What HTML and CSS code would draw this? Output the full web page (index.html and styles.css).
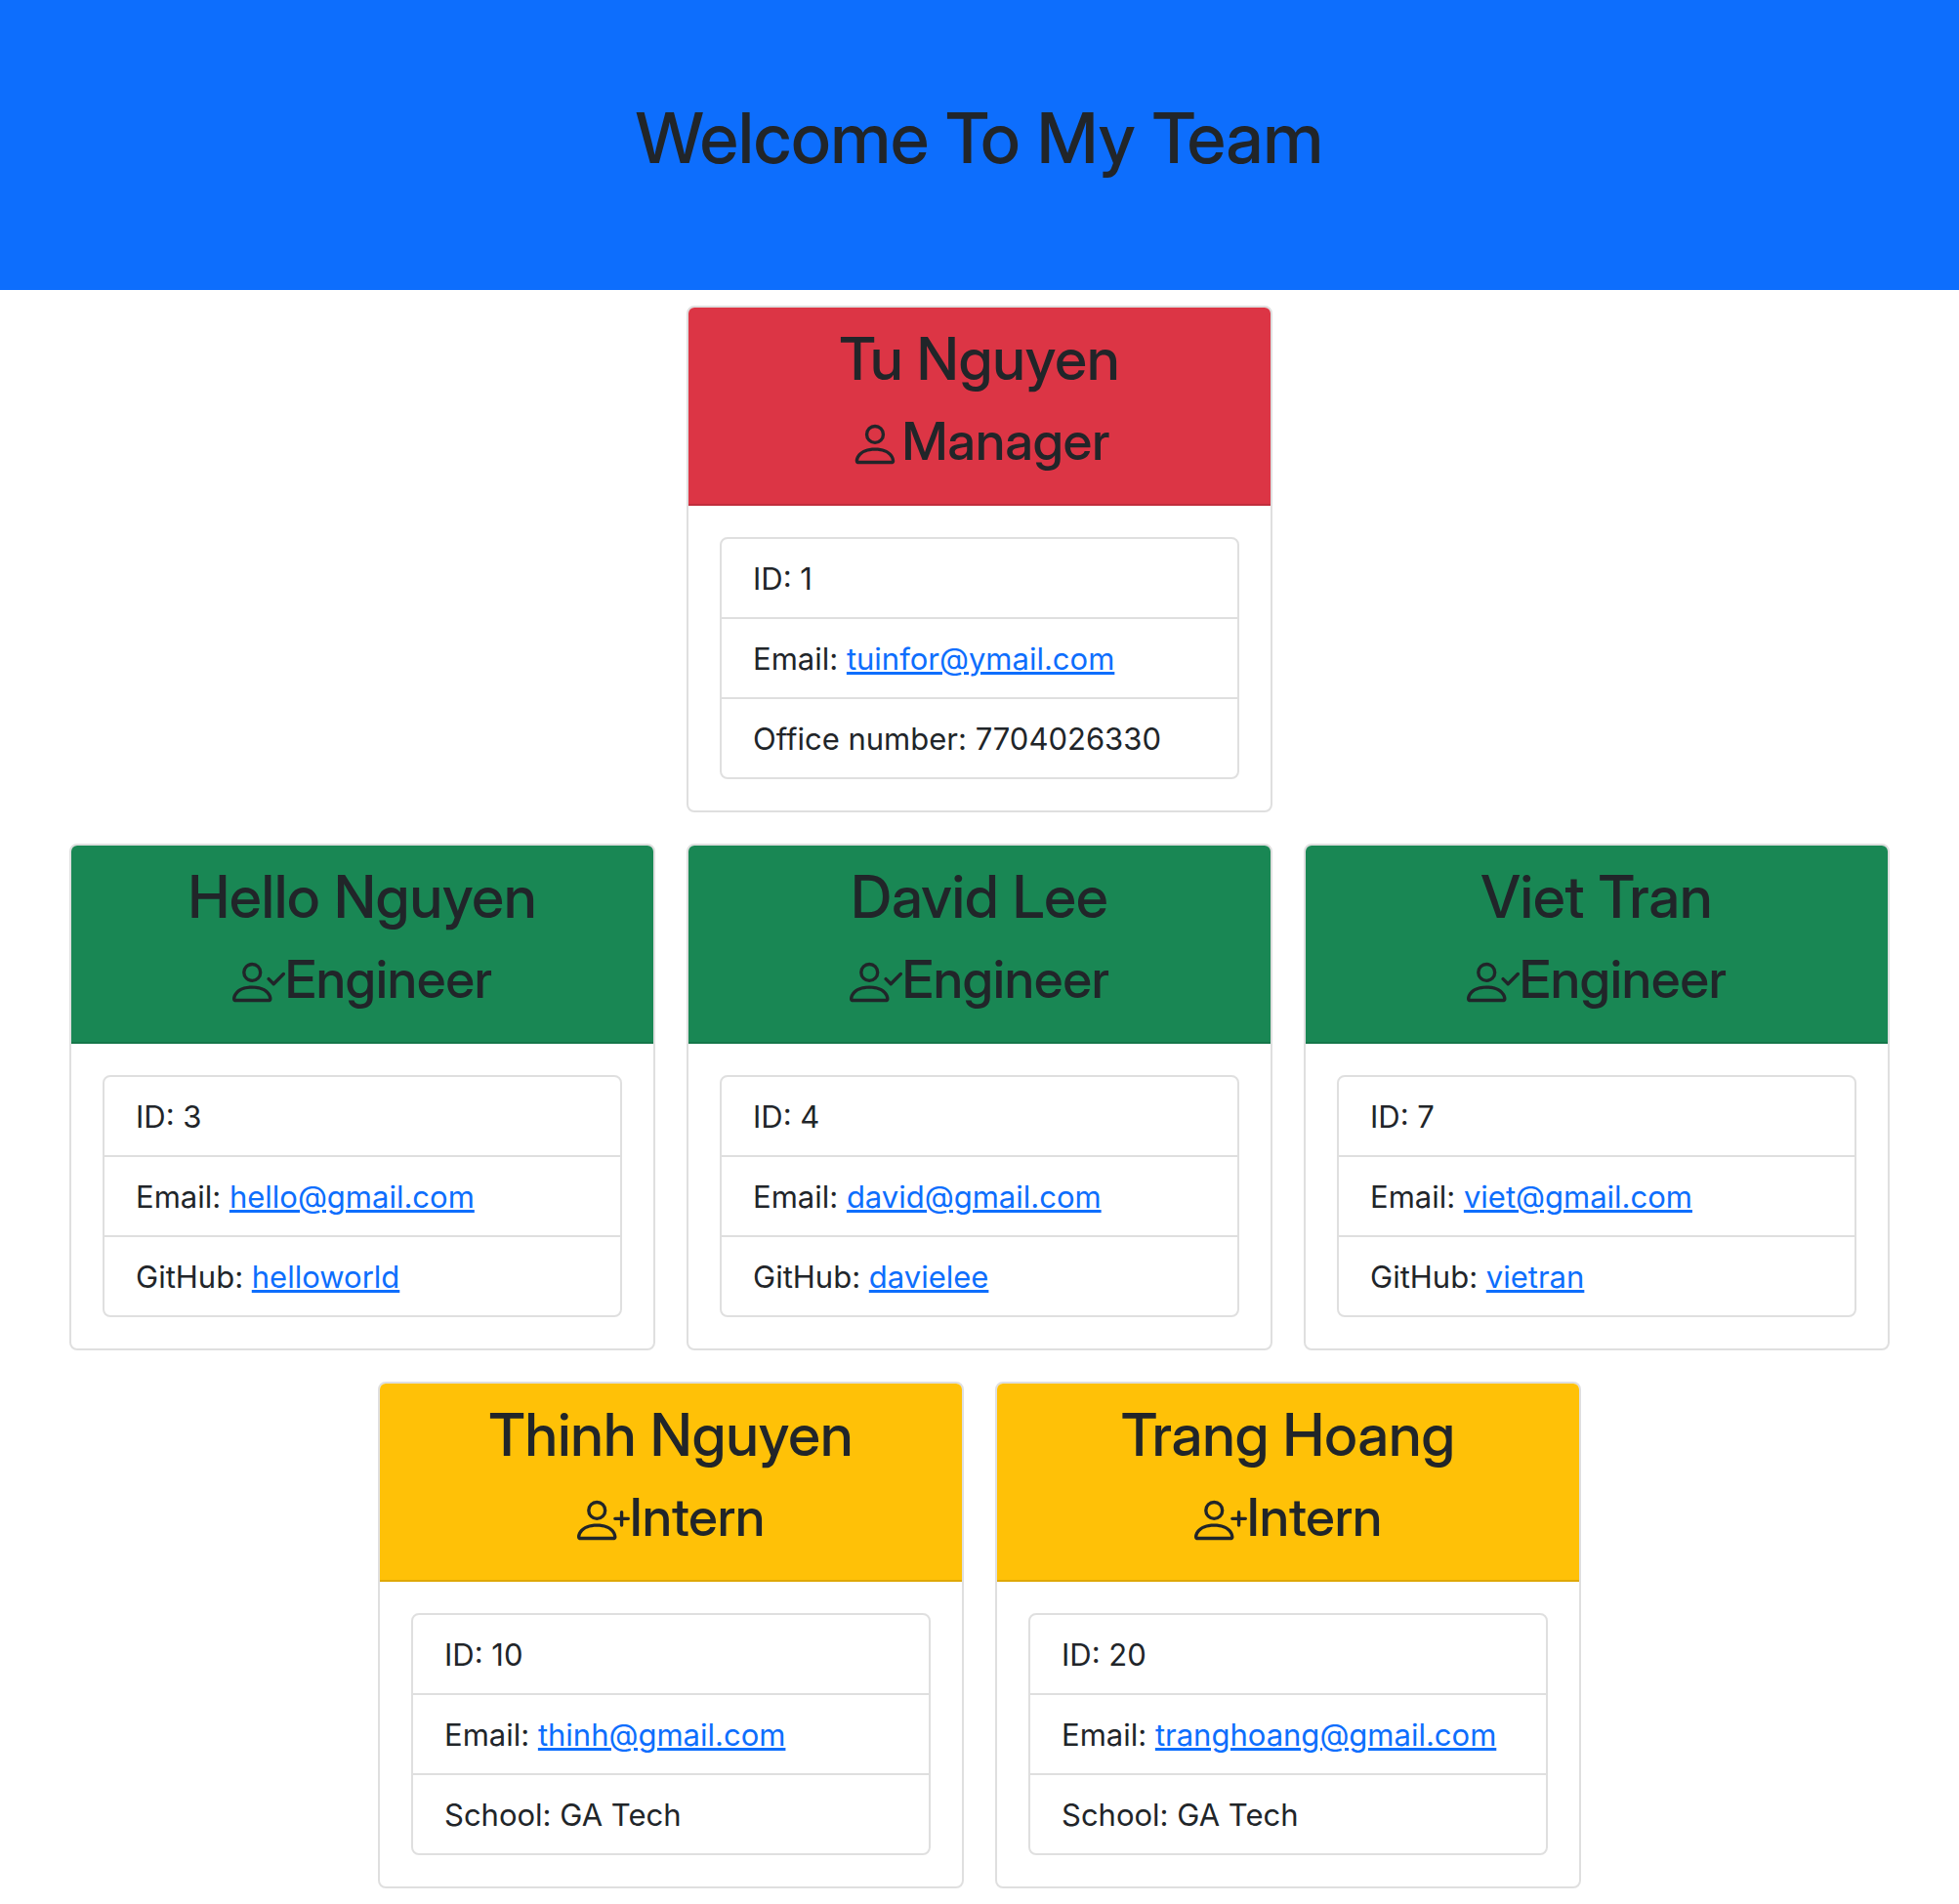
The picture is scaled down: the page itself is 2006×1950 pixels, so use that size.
FILE: index.html
```html
<!DOCTYPE html>
<html lang="en">
<head>
<meta charset="utf-8">
<meta name="viewport" content="width=device-width, initial-scale=1">
<title>My Team</title>
<link rel="stylesheet" href="styles.css">
</head>
<body>
<svg class="sprite" aria-hidden="true">
  <symbol id="person" viewBox="0 0 16 16"><path d="M8 8a3 3 0 1 0 0-6 3 3 0 0 0 0 6zm2-3a2 2 0 1 1-4 0 2 2 0 0 1 4 0zm4 8c0 1-1 1-1 1H3s-1 0-1-1 1-4 6-4 6 3 6 4zm-1-.004c-.001-.246-.154-.986-.832-1.664C11.516 10.68 10.289 10 8 10c-2.29 0-3.516.68-4.168 1.332-.678.678-.83 1.418-.832 1.664h10z"/></symbol>
  <symbol id="person-side" viewBox="0 0 16 16"><path d="M6 8a3 3 0 1 0 0-6 3 3 0 0 0 0 6zm2-3a2 2 0 1 1-4 0 2 2 0 0 1 4 0zm4 8c0 1-1 1-1 1H1s-1 0-1-1 1-4 6-4 6 3 6 4zm-1-.004c-.001-.246-.154-.986-.832-1.664C9.516 10.68 8.289 10 6 10c-2.29 0-3.516.68-4.168 1.332-.678.678-.83 1.418-.832 1.664h10z"/></symbol>
  <symbol id="person-check" viewBox="0 0 16 16"><use href="#person-side"/><path d="M15.854 5.146a.5.5 0 0 1 0 .708l-3 3a.5.5 0 0 1-.708 0l-1.5-1.5a.5.5 0 0 1 .708-.708L12.5 7.793l2.646-2.647a.5.5 0 0 1 .708 0z"/></symbol>
  <symbol id="person-plus" viewBox="0 0 16 16"><use href="#person-side"/><path d="M13.5 5a.5.5 0 0 1 .5.5V7h1.5a.5.5 0 0 1 0 1H14v1.5a.5.5 0 0 1-1 0V8h-1.5a.5.5 0 0 1 0-1H13V5.5a.5.5 0 0 1 .5-.5z"/></symbol>
</svg>
<header class="banner"><h1 class="banner-title">Welcome To My Team</h1></header>
<main class="team">
  <section class="team-row">
    <article class="card">
      <div class="card-header manager">
        <h2 class="name">Tu Nguyen</h2>
        <h3 class="role"><svg class="icon" aria-hidden="true"><use href="#person"/></svg>Manager</h3>
      </div>
      <ul class="details">
        <li>ID: 1</li>
        <li>Email: <a href="mailto:tuinfor@ymail.com">tuinfor@ymail.com</a></li>
        <li>Office number: 7704026330</li>
      </ul>
    </article>
  </section>
  <section class="team-row">
    <article class="card">
      <div class="card-header engineer">
        <h2 class="name">Hello Nguyen</h2>
        <h3 class="role"><svg class="icon" aria-hidden="true"><use href="#person-check"/></svg>Engineer</h3>
      </div>
      <ul class="details">
        <li>ID: 3</li>
        <li>Email: <a href="mailto:hello@gmail.com">hello@gmail.com</a></li>
        <li>GitHub: <a href="https://github.com/helloworld">helloworld</a></li>
      </ul>
    </article>
    <article class="card">
      <div class="card-header engineer">
        <h2 class="name">David Lee</h2>
        <h3 class="role"><svg class="icon" aria-hidden="true"><use href="#person-check"/></svg>Engineer</h3>
      </div>
      <ul class="details">
        <li>ID: 4</li>
        <li>Email: <a href="mailto:david@gmail.com">david@gmail.com</a></li>
        <li>GitHub: <a href="https://github.com/davielee">davielee</a></li>
      </ul>
    </article>
    <article class="card">
      <div class="card-header engineer">
        <h2 class="name">Viet Tran</h2>
        <h3 class="role"><svg class="icon" aria-hidden="true"><use href="#person-check"/></svg>Engineer</h3>
      </div>
      <ul class="details">
        <li>ID: 7</li>
        <li>Email: <a href="mailto:viet@gmail.com">viet@gmail.com</a></li>
        <li>GitHub: <a href="https://github.com/vietran">vietran</a></li>
      </ul>
    </article>
  </section>
  <section class="team-row">
    <article class="card">
      <div class="card-header intern">
        <h2 class="name">Thinh Nguyen</h2>
        <h3 class="role"><svg class="icon" aria-hidden="true"><use href="#person-plus"/></svg>Intern</h3>
      </div>
      <ul class="details">
        <li>ID: 10</li>
        <li>Email: <a href="mailto:thinh@gmail.com">thinh@gmail.com</a></li>
        <li>School: GA Tech</li>
      </ul>
    </article>
    <article class="card">
      <div class="card-header intern">
        <h2 class="name">Trang Hoang</h2>
        <h3 class="role"><svg class="icon" aria-hidden="true"><use href="#person-plus"/></svg>Intern</h3>
      </div>
      <ul class="details">
        <li>ID: 20</li>
        <li>Email: <a href="mailto:tranghoang@gmail.com">tranghoang@gmail.com</a></li>
        <li>School: GA Tech</li>
      </ul>
    </article>
  </section>
</main>
</body>
</html>
```
FILE: styles.css
```css
*, *::before, *::after { box-sizing: border-box; }

body {
  margin: 0;
  background: #fff;
  color: #212529;
  font-family: Inter, "Liberation Sans", sans-serif;
  font-size: 31px;
  line-height: 48px;
}

h1, h2, h3 {
  margin: 0 0 16px;
  font-family: "Inter Display", Inter, "Liberation Sans", sans-serif;
  font-weight: 500;
  text-align: center;
}

.sprite { display: none; }

.banner { padding: 96px; background: #0d6efd; }
.banner-title { font-size: 72px; line-height: 89px; }

.team { display: flex; flex-direction: column; gap: 32px; padding: 16px; }
.team-row { display: flex; flex-wrap: wrap; justify-content: center; gap: 32px; }

.card {
  width: 600px;
  max-width: 100%;
  border: 2px solid rgba(0, 0, 0, .125);
  border-radius: 8px;
}

.card-header {
  padding: 16px 32px;
  border-bottom: 2px solid rgba(0, 0, 0, .125);
  border-radius: 6px 6px 0 0;
}
.manager { background-color: #dc3545; }
.engineer { background-color: #198754; }
.intern { background-color: #ffc107; }

.name { font-size: 60px; line-height: 72px; }
.role { display: flex; justify-content: center; font-size: 54px; line-height: 65px; }
.icon { width: 54px; height: 54px; margin-top: 9px; fill: currentColor; }

.details {
  margin: 32px;
  padding: 0;
  list-style: none;
  border: 2px solid rgba(0, 0, 0, .125);
  border-radius: 8px;
}
.details li { padding: 17px 32px 15px; }
.details li + li { border-top: 2px solid rgba(0, 0, 0, .125); }

a { color: #0d6efd; text-decoration: underline; text-decoration-thickness: 3px; }
```
